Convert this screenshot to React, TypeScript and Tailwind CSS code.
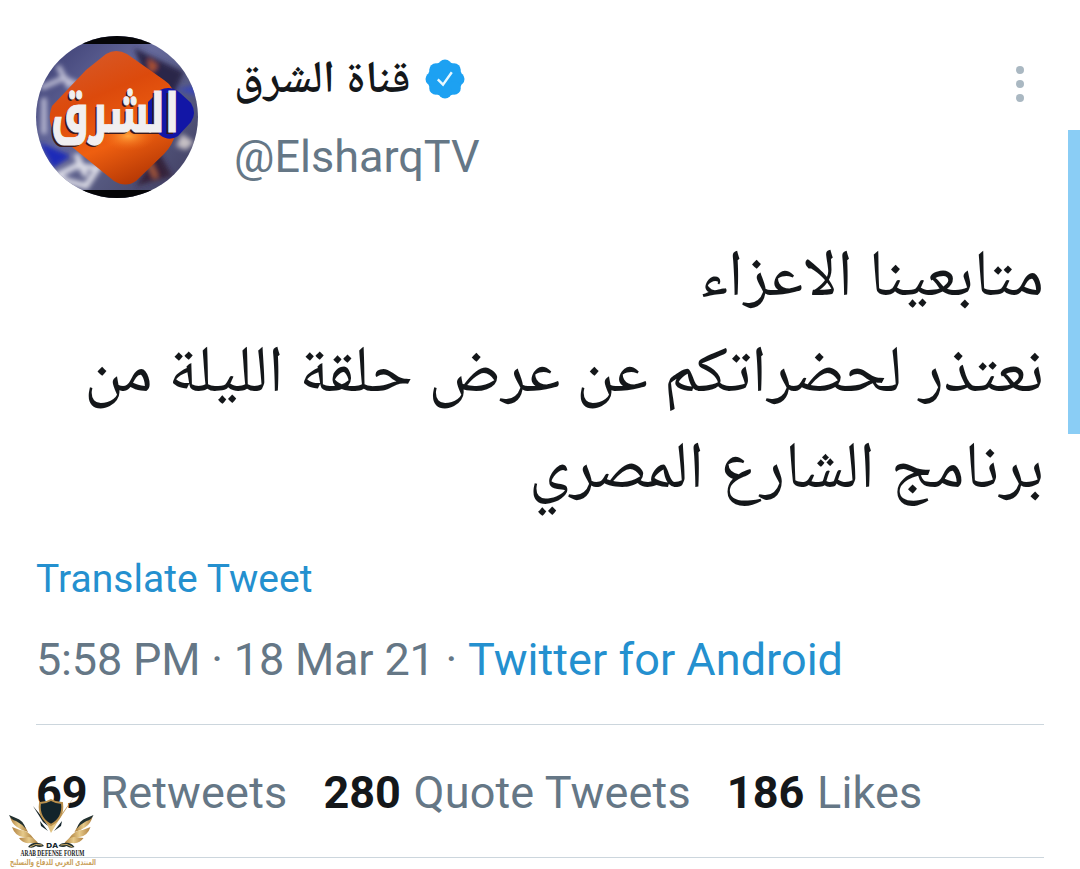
const stats = [
    { count: '69', label: 'Retweets' },
    { count: '280', label: 'Quote Tweets' },
    { count: '186', label: 'Likes' },
];

const tweetLines = ['متابعينا الاعزاء', 'نعتذر لحضراتكم عن عرض حلقة الليلة من', 'برنامج الشارع المصري'];

function Avatar() {
    return (
        <svg className="size-[162px] shrink-0 overflow-visible" viewBox="0 0 162 162">
            <defs>
                <clipPath id="round">
                    <circle cx="81" cy="81" r="81" />
                </clipPath>
                <linearGradient id="sky" x1="0" x2="1" y1="0" y2="1">
                    <stop offset="0" stopColor="#35376c" />
                    <stop offset="0.4" stopColor="#666a9c" />
                    <stop offset="0.65" stopColor="#55587f" />
                    <stop offset="1" stopColor="#3d3a5c" />
                </linearGradient>
                <linearGradient id="orange" x1="0.2" x2="0.6" y1="0" y2="1">
                    <stop offset="0" stopColor="#d65a2a" />
                    <stop offset="0.35" stopColor="#dc4a0c" />
                    <stop offset="0.7" stopColor="#ee5f10" />
                    <stop offset="1" stopColor="#b93a05" />
                </linearGradient>
                <radialGradient id="glow">
                    <stop offset="0" stopColor="#ffa53e" />
                    <stop offset="1" stopColor="#f06413" stopOpacity="0" />
                </radialGradient>
                <filter id="soft" x="-30%" y="-30%" width="160%" height="160%">
                    <feGaussianBlur stdDeviation="2.4" />
                </filter>
            </defs>
            <g clipPath="url(#round)">
                <rect width="162" height="162" fill="url(#sky)" />
                <g filter="url(#soft)">
                    <path d="M5 52 28 42 48 52M22 30l12 22M8 62v36" stroke="#c0c0d6" strokeWidth="5" fill="none" />
                    <path
                        d="M20 140 40 130 62 132 50 150 34 146zM40 118l10 22"
                        stroke="#dcdce6"
                        strokeWidth="6"
                        fill="none"
                    />
                    <path d="M3 106l32 14-18 12z" fill="#1d2ab8" />
                    <path d="M98 12l50 24-10 22-28-14z" fill="#2c2849" />
                    <path d="M112 22l10 8-8 8z" fill="#b0532f" />
                    <path d="M140 54l22-6v12z" fill="#3b46b4" />
                    <path d="M146 98l12 8-8 8-10-4z" fill="#c6c0c4" />
                    <path d="M100 150l22-36 14 26z" fill="#35233a" />
                    <path d="M114 128l6 14" stroke="#a5593a" strokeWidth="5" />
                </g>
                <path
                    d="M70 18Q80 12 91 18L128 44Q138 50 140 66V96Q137 109 128 118L100 145Q90 152 78 145L20 98Q10 86 16 70L50 34z"
                    fill="url(#orange)"
                />
                <ellipse cx="92" cy="100" rx="28" ry="15" fill="url(#glow)" />
                <path d="M124 54Q134 49 143 56L155 67Q161 77 155 86L142 100Q133 106 124 99L112 88V66z" fill="#1216a6" />
                <path d="M0 0h162v8H0zM0 154h162v8H0z" fill="#050507" />
            </g>
            <g fontFamily="'Noto Kufi Arabic', 'DejaVu Sans', sans-serif" fontWeight="800" fontSize="54" textAnchor="middle">
                <text x="77" y="98" fill="#3a1a1c" textLength="128" lengthAdjust="spacingAndGlyphs">
                    الشرق
                </text>
                <text
                    x="79"
                    y="96"
                    fill="#f1eff0"
                    stroke="#f1eff0"
                    strokeWidth="1.2"
                    textLength="128"
                    lengthAdjust="spacingAndGlyphs"
                >
                    الشرق
                </text>
            </g>
        </svg>
    );
}

function VerifiedBadge() {
    return (
        <svg className="size-10" viewBox="0 0 40 40">
            <g fill="#1da1f2">
                <circle cx="20" cy="20" r="17.4" />
                <circle cx="20" cy="7.3" r="6.8" />
                <circle cx="29" cy="11" r="6.8" />
                <circle cx="32.7" cy="20" r="6.8" />
                <circle cx="29" cy="29" r="6.8" />
                <circle cx="20" cy="32.7" r="6.8" />
                <circle cx="11" cy="29" r="6.8" />
                <circle cx="7.3" cy="20" r="6.8" />
                <circle cx="11" cy="11" r="6.8" />
            </g>
            <path d="M12.8 20.4 18 25.6 26.8 13.2" stroke="#e9f8ff" strokeWidth="2.4" fill="none" />
        </svg>
    );
}

function Wing() {
    return (
        <>
            <g fill="url(#gold)">
                <path d="M10 817Q12 824 17 827Q22 831 28 832Q24 823 17 821z" />
                <path d="M12 827Q15 836 23 837Q28 839 34 839Q28 830 20 830z" />
                <path d="M19 838Q23 844 30 843Q35 843 39 845Q35 837 28 837z" />
            </g>
            <path d="M9 815Q11 820 16 821Q22 824 26 829Q23 820 16 818z" fill="#22302f" />
            <path d="M28 847Q32 842 38 843Q42 843 44 846Q39 848 36 846Q32 849 28 847z" fill="#22302f" />
            <path d="M30 847Q35 843 42 845" stroke="#d3ae66" strokeWidth="1" fill="none" />
        </>
    );
}

function Watermark() {
    return (
        <svg className="absolute left-[6px] top-[796px] h-[73px] w-[94px] overflow-visible" viewBox="6 796 94 73">
            <defs>
                <linearGradient id="gold" x1="0" x2="1">
                    <stop offset="0" stopColor="#b08040" />
                    <stop offset="0.5" stopColor="#e6ca8a" />
                    <stop offset="1" stopColor="#a97a38" />
                </linearGradient>
            </defs>
            <Wing />
            <g transform="matrix(-1 0 0 1 102.5 0)">
                <Wing />
            </g>
            <path d="M40 821l8 10-7-5zM62 821l-8 10 7-5z" fill="#13242b" />
            <path d="M33 806L46 822 51 833 57 823 74 797 58 819 51 826 42 818z" fill="url(#gold)" />
            <path d="M33 806L43 822 48 826 42 817z" fill="#13242b" />
            <path
                d="M51 800Q56 803 62 803Q64 818 51 825Q38 818 40 803Q46 803 51 800z"
                fill="#13242b"
                stroke="#b98f4c"
                strokeWidth="2"
            />
            <text
                x="46"
                y="847.5"
                fill="#13242b"
                fontFamily="'DejaVu Sans', sans-serif"
                fontWeight="700"
                fontSize="7"
                textLength="12"
                lengthAdjust="spacingAndGlyphs"
            >
                DA
            </text>
            <text
                x="20.5"
                y="855.5"
                fill="#222222"
                fontFamily="'Liberation Serif', serif"
                fontWeight="700"
                fontSize="7.2"
                textLength="64"
                lengthAdjust="spacingAndGlyphs"
            >
                ARAB DEFENSE FORUM
            </text>
            <text
                x="53"
                y="865"
                fill="#c9a15a"
                fontFamily="'DejaVu Sans', sans-serif"
                fontWeight="700"
                fontSize="8.5"
                textAnchor="middle"
                textLength="86"
                lengthAdjust="spacingAndGlyphs"
            >
                المنتدى العربي للدفاع والتسليح
            </text>
        </svg>
    );
}

export default function App() {
    return (
        <main className="relative h-[869px] w-[1080px] overflow-hidden bg-white px-9 pt-9 font-[Roboto,'Noto_Naskh_Arabic',sans-serif] text-[#14171a]">
            <header className="flex h-[162px]">
                <Avatar />
                <div className="ml-9 flex flex-col">
                    <div className="flex h-[86px] items-center gap-[15px]">
                        <span className="pb-1 text-[45.5px] leading-[60px] font-semibold" dir="rtl">
                            قناة الشرق
                        </span>
                        <VerifiedBadge />
                    </div>
                    <span className="text-[45px] leading-[70px] text-[#657786]">@ElsharqTV</span>
                </div>
                <div className="ml-auto mr-5 mt-[30px] flex flex-col gap-1.5">
                    <i className="size-2 rounded-full bg-[#aab8c2]" />
                    <i className="size-2 rounded-full bg-[#aab8c2]" />
                    <i className="size-2 rounded-full bg-[#aab8c2]" />
                </div>
            </header>

            <div className="mt-[27px] text-[65.8px] leading-24 [word-spacing:-0.5px]" dir="rtl">
                {tweetLines.map((line) => (
                    <p className="h-24 whitespace-nowrap" key={line}>
                        {line}
                    </p>
                ))}
            </div>

            <p className="mt-[39px] text-[39px] leading-[54px] tracking-[0.05px] text-[#2490cf]">Translate Tweet</p>
            <p className="mt-[26px] text-[45px] leading-[56px] text-[#657786]">
                <span className="tracking-[-0.19px]">5:58 PM · 18 Mar 21 · </span>
                <span className="tracking-[0.04px] text-[#2490cf]">Twitter for Android</span>
            </p>

            <div className="mt-9 flex h-[134px] gap-9 border-y border-[#ccd6dd] pt-10 text-[45px] leading-[56px]">
                {stats.map(({ count, label }) => (
                    <span key={label}>
                        <b className="mr-[1.5px]">{count}</b>{' '}
                        <span className="tracking-[0.16px] text-[#657786]">{label}</span>
                    </span>
                ))}
            </div>

            <div className="absolute right-0 top-[130px] h-[304px] w-3 bg-[#8acdf5]" />
            <Watermark />
        </main>
    );
}
